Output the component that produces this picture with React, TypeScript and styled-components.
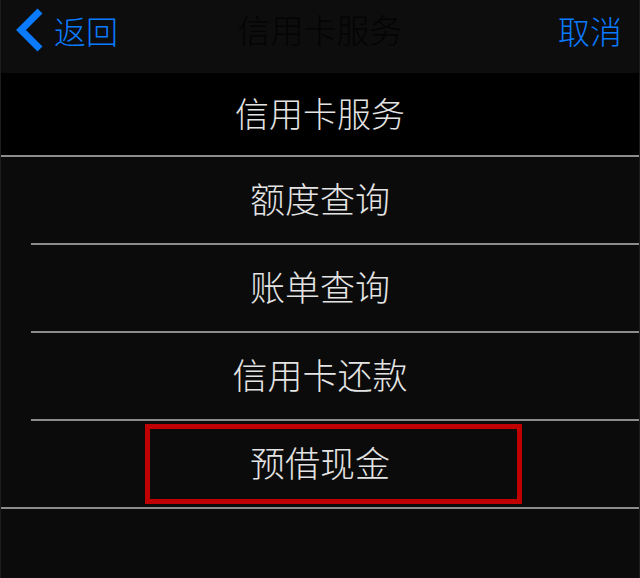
import React from "react";
import styled, { createGlobalStyle } from "styled-components";

const GlobalStyle = createGlobalStyle`
  html, body {
    margin: 0;
    padding: 0;
    background: #0b0b0b;
  }
  body {
    font-family: "Noto Sans CJK SC", "Noto Sans", sans-serif;
  }
`;

const Screen = styled.div`
  display: flex;
  flex-direction: column;
  width: 640px;
  height: 578px;
  box-sizing: border-box;
  background: #0b0b0b;
  border-left: 1px solid #1c1c1c;
  border-right: 1px solid #1c1c1c;
  overflow: hidden;
`;

const NavBar = styled.div`
  display: flex;
  align-items: flex-start;
  justify-content: space-between;
  height: 73px;
  flex-shrink: 0;
  padding: 0 17px 0 14px;
  background: #0d0d0d;
  position: relative;
`;

const NavButton = styled.div`
  display: flex;
  align-items: center;
  gap: 9px;
  height: 60px;
  color: #0a7aff;
  font-size: 32px;
  font-weight: 300;
  line-height: 58px;
`;

const NavTitle = styled.div`
  position: absolute;
  left: 0;
  right: 0;
  top: 0;
  text-align: center;
  font-size: 33px;
  font-weight: 300;
  line-height: 58px;
  color: #040404;
  pointer-events: none;
`;

const SectionHeader = styled.div`
  display: flex;
  align-items: center;
  justify-content: center;
  height: 84px;
  flex-shrink: 0;
  box-sizing: border-box;
  padding-bottom: 4px;
  background: #000;
  border-bottom: 2px solid #8c8c8c;
  color: #e4e4e4;
  font-size: 34px;
  font-weight: 300;
`;

const List = styled.div`
  display: flex;
  flex-direction: column;
  gap: 2px;
`;

const Row = styled.div<{ $inset: boolean }>`
  position: relative;
  display: flex;
  align-items: center;
  justify-content: center;
  height: 86px;
  box-sizing: border-box;
  padding-bottom: 6px;
  color: #e4e4e4;
  font-size: 35px;
  font-weight: 300;

  &::after {
    content: "";
    position: absolute;
    bottom: -2px;
    left: ${(p) => (p.$inset ? "30px" : "0")};
    right: 0;
    height: 2px;
    background: #8c8c8c;
  }
`;

const Highlight = styled.div`
  position: absolute;
  left: 144px;
  top: 3px;
  width: 377px;
  height: 80px;
  box-sizing: border-box;
  border: 5px solid #c00000;
`;

const Chevron = () => (
  <svg width="30" height="44" viewBox="0 0 30 44">
    <polyline
      points="25,3 6,22 25,41"
      fill="none"
      stroke="#0a7aff"
      strokeWidth="7"
      strokeLinecap="butt"
      strokeLinejoin="miter"
    />
  </svg>
);

const items = ["额度查询", "账单查询", "信用卡还款", "预借现金"];

export default function App() {
  return (
    <Screen>
      <GlobalStyle />
      <NavBar>
        <NavButton>
          <Chevron />
          <span>返回</span>
        </NavButton>
        <NavTitle>信用卡服务</NavTitle>
        <NavButton>取消</NavButton>
      </NavBar>
      <SectionHeader>信用卡服务</SectionHeader>
      <List>
        {items.map((label, i) => (
          <Row key={label} $inset={i < items.length - 1}>
            {label}
            {i === items.length - 1 && <Highlight />}
          </Row>
        ))}
      </List>
    </Screen>
  );
}
